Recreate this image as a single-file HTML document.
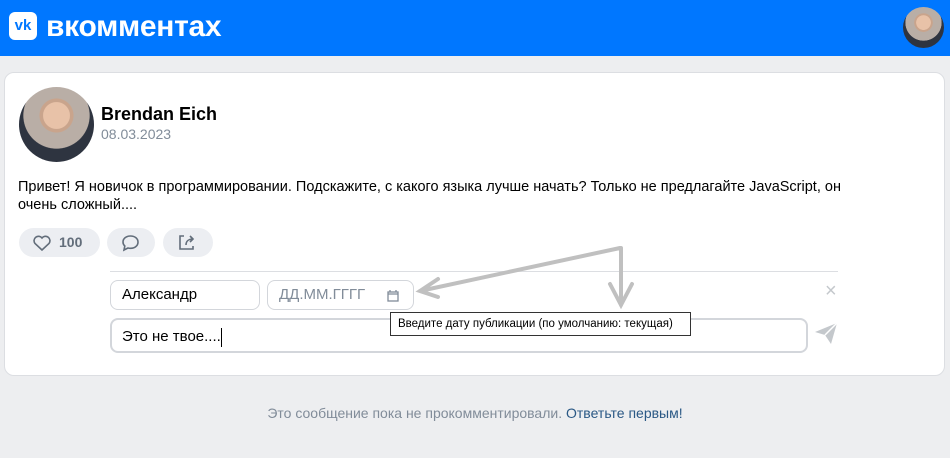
<!DOCTYPE html>
<html><head><meta charset="utf-8"><style>
*{box-sizing:border-box;margin:0;padding:0}
body{width:950px;height:458px;background:#edeef0;font-family:"Liberation Sans",sans-serif;position:relative;overflow:hidden}
.hdr{position:absolute;left:0;top:0;width:950px;height:56px;background:#0077ff}
.logo{position:absolute;left:9px;top:12px;width:28px;height:28px;background:#fff;border-radius:6px;color:#0077ff;font-weight:bold;font-size:15px;text-align:center;line-height:28px}
.brand{position:absolute;left:46px;top:10px;color:#fff;font-weight:bold;font-size:30px;letter-spacing:-0.3px}
.av{position:absolute;border-radius:50%;background:radial-gradient(circle at 50% 38%,#e8c2a8 0 22%,#c9a48c 23% 28%,#b9aea6 29% 55%,#2e3440 56%);}
.card{position:absolute;left:4px;top:72px;width:941px;height:304px;background:#fff;border:1px solid #dcdee2;border-radius:10px}
.t{position:absolute;white-space:nowrap}
.btn{position:absolute;top:228px;height:29px;background:#eceef2;border-radius:15px}
.inp{position:absolute;border:1px solid #d3d6db;border-radius:8px;background:#fff;font-size:15px;padding-left:11px}
</style></head><body>
<div class="hdr"><div class="logo">vk</div><div class="brand">вкомментах</div>
<div class="av" style="left:903px;top:7px;width:41px;height:41px"></div></div>
<div class="card"></div>
<div class="av" style="left:19px;top:87px;width:75px;height:75px"></div>
<div class="t" style="left:101px;top:104px;font-size:18px;font-weight:bold;color:#000">Brendan Eich</div>
<div class="t" style="left:101px;top:126px;font-size:14px;color:#818c99">08.03.2023</div>
<div class="t" style="left:18px;top:178px;font-size:14.5px;color:#000;line-height:18px">Привет! Я новичок в программировании. Подскажите, с какого языка лучше начать? Только не предлагайте JavaScript, он<br>очень сложный....</div>
<div class="btn" style="left:19px;width:81px"><svg style="position:absolute;left:14px;top:7px" width="18" height="16" viewBox="0 0 18 16"><path d="M9 15L2 8.5A4 4 0 0 1 9 3a4 4 0 0 1 7 5.5Z" fill="none" stroke="#626d7a" stroke-width="1.6"/></svg><span class="t" style="left:40px;top:6px;font-size:14px;font-weight:bold;color:#626d7a">100</span></div>
<div class="btn" style="left:107px;width:48px"><svg style="position:absolute;left:14px;top:6px" width="19" height="18" viewBox="0 0 19 18"><path d="M9.5 2C5 2 2 4.7 2 8c0 1.6.7 3 1.8 4L3 16l4-2c.8.2 1.6.3 2.5.3 4.5 0 7.5-2.7 7.5-6.2S14 2 9.5 2Z" fill="none" stroke="#626d7a" stroke-width="1.6"/></svg></div>
<div class="btn" style="left:163px;width:50px"><svg style="position:absolute;left:14px;top:5px" width="20" height="19" viewBox="0 0 20 19"><path d="M7 3H3v13h13v-3M9 12c0-4 3-6 7-6M13 3l3 3-3 3" fill="none" stroke="#626d7a" stroke-width="1.6"/></svg></div>
<div style="position:absolute;left:110px;top:271px;width:728px;height:1px;background:#dcdee2"></div>
<div class="inp" style="left:110px;top:280px;width:150px;height:30px;line-height:28px;color:#000">Александр</div>
<div class="inp" style="left:267px;top:280px;width:147px;height:30px;line-height:28px;color:#818c99">ДД.ММ.ГГГГ<svg style="position:absolute;left:119px;top:8px" width="12" height="13" viewBox="0 0 12 13"><rect x="1" y="3" width="10" height="9" fill="none" stroke="#818c99" stroke-width="1.3"/><path d="M1 5h10M3 1v2M9 1v2" stroke="#818c99" stroke-width="1.3"/></svg></div>
<div class="inp" style="left:110px;top:318px;width:698px;height:35px;line-height:33px;border:2px solid #d3d6db;color:#000;padding-left:10px">Это не твое....<span style="display:inline-block;width:1px;height:19px;background:#000;vertical-align:middle"></span></div>
<div class="t" style="left:825px;top:280px;font-size:20px;color:#c4c8cc">×</div>
<svg style="position:absolute;left:813px;top:320px" width="26" height="26" viewBox="0 0 26 26"><path d="M2 12L24 3 18 24 12 15Z" fill="#c4c8cc"/><path d="M12 15L24 3" stroke="#fff" stroke-width="1.5"/></svg>
<svg style="position:absolute;left:0;top:0" width="950" height="458"><g stroke="#c0c0c0" stroke-width="4" fill="none" stroke-linecap="round"><path d="M620 248L420 291M438 279L420 291 438 297M621 248V305M610 284L621 305 632 284"/></g></svg>
<div class="t" style="left:390px;top:312px;height:24px;width:301px;background:#fff;border:1px solid #333;font-size:11.5px;line-height:22px;padding-left:7px;color:#000">Введите дату публикации (по умолчанию: текущая)</div>
<div class="t" style="left:0;width:950px;text-align:center;top:405px;font-size:14px;color:#818c99">Это сообщение пока не прокомментировали. <span style="color:#2a5885">Ответьте первым!</span></div>
</body></html>
